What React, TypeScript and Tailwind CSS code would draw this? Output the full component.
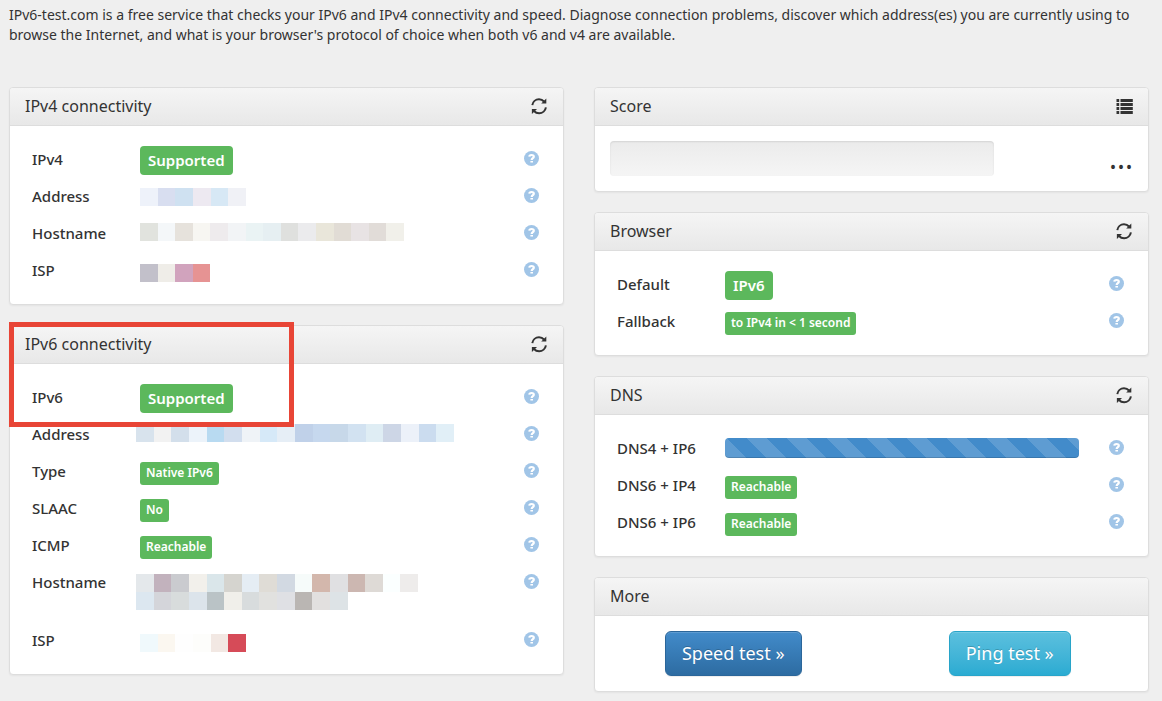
import type { ReactNode } from "react";

const RefreshIcon = () => (
  <svg width="17" height="17" viewBox="0 0 17 17" fill="none" aria-hidden="true">
    <path d="M1.3 7.2C1.8 3.8 4.6 1.3 8 1.3c2 0 3.8.8 5 2.2" stroke="#333" strokeWidth="2" />
    <path d="M15.3.6v4.9h-5.1z" fill="#333" />
    <path d="M14.9 9.3c-.5 3.4-3.4 5.9-6.8 5.9-2 0-3.8-.8-5.1-2.2" stroke="#333" strokeWidth="2" />
    <path d="M.9 16v-5H6z" fill="#333" />
  </svg>
);

const ListIcon = () => (
  <svg width="17" height="15" viewBox="0 0 17 15" fill="#333" aria-hidden="true">
    {[0, 4, 8, 12].map((y) => (
      <g key={y}>
        <rect x="0.5" y={y} width="2.7" height="3" />
        <rect x="4.5" y={y} width="12.3" height="3" />
      </g>
    ))}
  </svg>
);

const HelpIcon = () => (
  <svg width="15" height="15" viewBox="0 0 15 15" fill="none" aria-hidden="true">
    <circle cx="7.5" cy="7.5" r="7.5" fill="#a1c5e7" />
    <path d="M5.300 5.700C5.400 4.500 6.300 4 7.500 4c1.400 0 2.300.6 2.300 1.700C9.800 7.200 7.700 7.200 7.700 9" stroke="#fff" strokeWidth="2.200" />
    <rect x="6.400" y="10" width="2.600" height="1.500" fill="#fff" />
  </svg>
);

type PanelProps = {
  title: string;
  action?: "refresh" | "list";
  children: ReactNode;
};

const Panel = ({ title, action, children }: PanelProps) => (
  <section className="rounded border border-[#ddd] bg-white shadow-[0_1px_2px_rgba(0,0,0,0.05)]">
    <div className="flex h-[38px] items-center justify-between rounded-t-[3px] border-b border-[#ddd] bg-linear-to-b from-[#f5f5f5] to-[#e8e8e8] px-[15px]">
      <h3 className="pb-0.5 text-base leading-[18px]">{title}</h3>
      {action && (
        <button type="button" aria-label={action === "refresh" ? `Refresh ${title}` : "Score details"}>
          {action === "refresh" ? <RefreshIcon /> : <ListIcon />}
        </button>
      )}
    </div>
    {children}
  </section>
);

const Badge = ({ large, children }: { large?: boolean; children: ReactNode }) =>
  large ? (
    <span className="mt-[5px] inline-block rounded bg-[#5cb85c] px-2 text-[15px] leading-[29px] font-semibold text-white">
      {children}
    </span>
  ) : (
    <span className="mt-[9px] inline-block rounded-[3px] bg-[#5cb85c] px-1.5 pb-0.5 text-xs leading-[21px] font-semibold text-white">
      {children}
    </span>
  );

// Private values are shown as rows of coloured blocks
const Mosaic = ({ className, rows }: { className: string; rows: string[][] }) => (
  <div className={className} role="img" aria-label="Hidden value">
    {rows.map((row, i) => (
      <div key={i} className="flex h-[18px]">
        {row.map((color, j) => (
          <span key={j} className="flex-1" style={{ backgroundColor: color }} />
        ))}
      </div>
    ))}
  </div>
);

type Row = { label: string; value: ReactNode; tall?: boolean };

const ResultTable = ({ rows }: { rows: Row[] }) => (
  <div className="px-[14px] py-[15px]">
    <table className="w-full table-fixed">
      <tbody>
        {rows.map((row) => (
          <tr key={row.label} className={row.tall ? "h-[58px]" : "h-[37px]"}>
            <th scope="row" className="w-[116px] p-0 pt-2 pl-2 text-left align-top text-[15px] leading-5 font-medium">
              {row.label}
            </th>
            <td className="p-0 align-top leading-none">{row.value}</td>
            <td className="w-[55px] p-0 pt-[10px] pr-[10px] align-top">
              <button type="button" aria-label={`Help: ${row.label}`} className="ml-auto block">
                <HelpIcon />
              </button>
            </td>
          </tr>
        ))}
      </tbody>
    </table>
  </div>
);

const ipv4Rows: Row[] = [
  { label: "IPv4", value: <Badge large>Supported</Badge> },
  {
    label: "Address",
    value: (
      <Mosaic
        className="w-[106px] pt-[10px]"
        rows={[["#eef2fa", "#d8def0", "#cfe1f1", "#ede9f1", "#d7e8f5", "#f0f1f6"]]}
      />
    ),
  },
  {
    label: "Hostname",
    value: (
      <Mosaic
        className="w-[264px] pt-2"
        rows={[
          [
            "#e1e3de", "#f4f7f9", "#e6e2dc", "#f7f6f2", "#eeebed", "#f2f4f6", "#eaf3f4", "#e6eff2",
            "#dfe0de", "#ebebed", "#e9e6da", "#e1dcd5", "#e8e3e4", "#e1dcd8", "#f1f0ea",
          ],
        ]}
      />
    ),
  },
  {
    label: "ISP",
    value: <Mosaic className="w-[70px] pt-3" rows={[["#c2c0ca", "#efede8", "#d1a3bd", "#e69393"]]} />,
  },
];

const ipv6Rows: Row[] = [
  { label: "IPv6", value: <Badge large>Supported</Badge> },
  {
    label: "Address",
    value: (
      <Mosaic
        className="-ml-1 w-[318px] pt-2"
        rows={[
          [
            "#d8e3ed", "#f2f2f2", "#d3dfeb", "#ecf3fa", "#b8daf1", "#d2deee", "#eff3f7", "#d6e9f8", "#e6eef6",
            "#c0d1e9", "#c6d8ee", "#c7d8e9", "#d2e2f1", "#dfedf4", "#cdd6e6", "#ecf1f9", "#cbdcef", "#e1eff7",
          ],
        ]}
      />
    ),
  },
  { label: "Type", value: <Badge>Native IPv6</Badge> },
  { label: "SLAAC", value: <Badge>No</Badge> },
  { label: "ICMP", value: <Badge>Reachable</Badge> },
  {
    label: "Hostname",
    tall: true,
    value: (
      <Mosaic
        className="-ml-1 w-[282px] pt-[10px]"
        rows={[
          [
            "#e4e8eb", "#c2b2bd", "#cacbcf", "#f2f0eb", "#dae6ea", "#d5d4cf", "#e5edf4", "#dfdcd6",
            "#d2d9e2", "#f6fbfa", "#d3b7ac", "#e0e0e2", "#ccb7b1", "#dedad6", "#fbffff", "#eeeceb",
          ],
          [
            "#dce7f0", "#d4d5da", "#d8dcdc", "#dce4eb", "#bac3c6", "#f0efea", "#d8dcdd", "#e1e1df",
            "#dfe0e4", "#bab6b3", "#e2e0df", "#dde3e6", "#fff", "#fff", "#fff", "#fff",
          ],
        ]}
      />
    ),
  },
  {
    label: "ISP",
    value: (
      <Mosaic
        className="w-[106px] pt-3"
        rows={[["#f0f9fc", "#fbf7f0", "#fefefe", "#fdfdfb", "#f2e8e3", "#d64b58"]]}
      />
    ),
  },
];

const browserRows: Row[] = [
  { label: "Default", value: <Badge large>IPv6</Badge> },
  { label: "Fallback", value: <Badge>to IPv4 in &lt; 1 second</Badge> },
];

const dnsRows: Row[] = [
  {
    label: "DNS4 + IP6",
    value: (
      <div
        role="progressbar"
        aria-label="DNS4 + IP6"
        className="mt-2 h-5 rounded bg-[#428bca] bg-[linear-gradient(45deg,rgba(255,255,255,.15)_25%,transparent_25%,transparent_50%,rgba(255,255,255,.15)_50%,rgba(255,255,255,.15)_75%,transparent_75%,transparent)] bg-[length:40px_40px] bg-[position:22px_0] shadow-[inset_0_-1px_0_rgba(0,0,0,0.15)]"
      />
    ),
  },
  { label: "DNS6 + IP4", value: <Badge>Reachable</Badge> },
  { label: "DNS6 + IP6", value: <Badge>Reachable</Badge> },
];

export default function App() {
  return (
    <main className="min-h-screen bg-[#efefef] pt-[5px] pr-[13px] pb-[9px] pl-[9px] font-['Noto_Sans',sans-serif] text-[#333]">
      <p className="mb-[42px] text-sm leading-5">
        IPv6-test.com is a free service that checks your IPv6 and IPv4 connectivity and speed. Diagnose connection
        problems, discover which address(es) you are currently using to browse the Internet, and what is your browser's
        protocol of choice when both v6 and v4 are available.
      </p>

      <div className="grid grid-cols-2 items-start gap-[30px]">
        <div className="flex flex-col gap-5">
          <Panel title="IPv4 connectivity" action="refresh">
            <ResultTable rows={ipv4Rows} />
          </Panel>
          <div className="relative">
            <Panel title="IPv6 connectivity" action="refresh">
              <ResultTable rows={ipv6Rows} />
            </Panel>
            <div className="pointer-events-none absolute -top-[3px] left-0 h-[105px] w-[285px] border-[5px] border-[#e84536]" />
          </div>
        </div>

        <div className="flex flex-col gap-5">
          <Panel title="Score" action="list">
            <div className="flex justify-between p-[15px]">
              <div className="h-[35px] w-[384px] rounded bg-linear-to-b from-[#ebebeb] to-[#f5f5f5] shadow-[inset_0_1px_2px_rgba(0,0,0,0.1)]" />
              <span className="text-3xl leading-[33px]">...</span>
            </div>
          </Panel>
          <Panel title="Browser" action="refresh">
            <ResultTable rows={browserRows} />
          </Panel>
          <Panel title="DNS" action="refresh">
            <ResultTable rows={dnsRows} />
          </Panel>
          <Panel title="More">
            <div className="grid grid-cols-2 justify-items-center py-[15px] text-lg leading-[43px] text-white text-shadow-[0_-1px_0_rgba(0,0,0,0.2)]">
              <a
                href="#speedtest"
                className="rounded-md border border-[#2b669a] bg-linear-to-b from-[#428bca] to-[#2d6ca2] px-4 shadow-[inset_0_1px_0_rgba(255,255,255,0.15),0_1px_1px_rgba(0,0,0,0.075)]"
              >
                Speed test »
              </a>
              <a
                href="#pingtest"
                className="rounded-md border border-[#28a4c9] bg-linear-to-b from-[#5bc0de] to-[#2aabd2] px-4 shadow-[inset_0_1px_0_rgba(255,255,255,0.15),0_1px_1px_rgba(0,0,0,0.075)]"
              >
                Ping test »
              </a>
            </div>
          </Panel>
        </div>
      </div>
    </main>
  );
}
